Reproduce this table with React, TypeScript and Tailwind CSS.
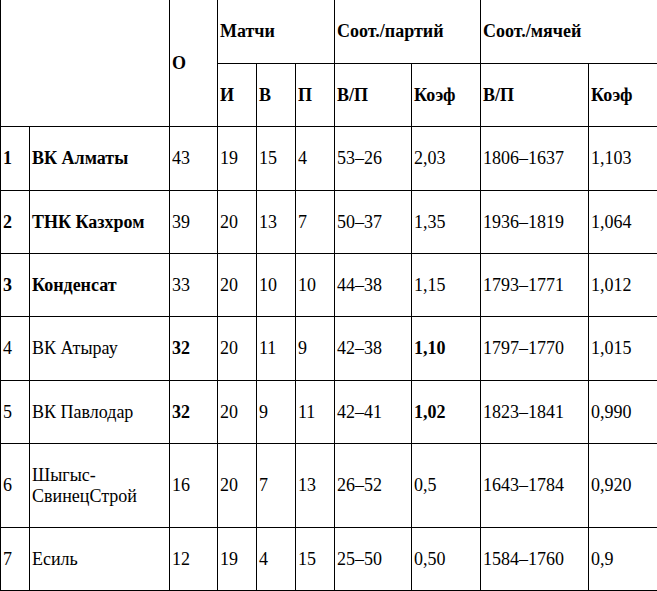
import React from "react";

type Row = {
  n: string;
  name: string;
  o: string;
  i: string;
  w: string;
  l: string;
  sp: string;
  kp: string;
  sm: string;
  km: string;
  boldName?: boolean;
  boldO?: boolean;
  boldKp?: boolean;
  h: string;
};

const rows: Row[] = [
  { n: "1", name: "ВК Алматы", o: "43", i: "19", w: "15", l: "4", sp: "53–26", kp: "2,03", sm: "1806–1637", km: "1,103", boldName: true, h: "h-[64px]" },
  { n: "2", name: "ТНК Казхром", o: "39", i: "20", w: "13", l: "7", sp: "50–37", kp: "1,35", sm: "1936–1819", km: "1,064", boldName: true, h: "h-[63px]" },
  { n: "3", name: "Конденсат", o: "33", i: "20", w: "10", l: "10", sp: "44–38", kp: "1,15", sm: "1793–1771", km: "1,012", boldName: true, h: "h-[63px]" },
  { n: "4", name: "ВК Атырау", o: "32", i: "20", w: "11", l: "9", sp: "42–38", kp: "1,10", sm: "1797–1770", km: "1,015", boldO: true, boldKp: true, h: "h-[64px]" },
  { n: "5", name: "ВК Павлодар", o: "32", i: "20", w: "9", l: "11", sp: "42–41", kp: "1,02", sm: "1823–1841", km: "0,990", boldO: true, boldKp: true, h: "h-[63px]" },
  { n: "6", name: "Шыгыс-СвинецСтрой", o: "16", i: "20", w: "7", l: "13", sp: "26–52", kp: "0,5", sm: "1643–1784", km: "0,920", h: "h-[84px]" },
  { n: "7", name: "Есиль", o: "12", i: "19", w: "4", l: "15", sp: "25–50", kp: "0,50", sm: "1584–1760", km: "0,9", h: "h-[63px]" },
];

const td =
  "border border-solid border-[#000000] px-[2px] py-0 align-middle text-left font-['Liberation_Serif','Times_New_Roman',serif] text-[18px] leading-[21px] text-black";

export default function App() {
  return (
    <div className="w-[657px] h-[591px] overflow-hidden bg-white font-['Liberation_Serif','Times_New_Roman',serif]">
      <table className="table-fixed border-collapse w-[657px] -mt-px">
        <colgroup>
          <col className="w-[29px]" />
          <col className="w-[140px]" />
          <col className="w-[48px]" />
          <col className="w-[39px]" />
          <col className="w-[39px]" />
          <col className="w-[39px]" />
          <col className="w-[77px]" />
          <col className="w-[69px]" />
          <col className="w-[108px]" />
          <col className="w-[69px]" />
        </colgroup>
        <tbody>
          <tr className="h-[64px]">
            <td className={td} colSpan={2} rowSpan={2}></td>
            <td className={`${td} font-bold`} rowSpan={2}>О</td>
            <td className={`${td} font-bold`} colSpan={3}>Матчи</td>
            <td className={`${td} font-bold`} colSpan={2}>Соот./партий</td>
            <td className={`${td} font-bold`} colSpan={2}>Соот./мячей</td>
          </tr>
          <tr className="h-[63px]">
            <td className={`${td} font-bold`}>И</td>
            <td className={`${td} font-bold`}>В</td>
            <td className={`${td} font-bold`}>П</td>
            <td className={`${td} font-bold`}>В/П</td>
            <td className={`${td} font-bold`}>Коэф</td>
            <td className={`${td} font-bold`}>В/П</td>
            <td className={`${td} font-bold`}>Коэф</td>
          </tr>
          {rows.map((r) => (
            <tr key={r.n} className={r.h}>
              <td className={`${td} ${r.boldName ? "font-bold" : ""}`}>{r.n}</td>
              <td className={`${td} ${r.boldName ? "font-bold" : ""}`}>{r.name}</td>
              <td className={`${td} ${r.boldO ? "font-bold" : ""}`}>{r.o}</td>
              <td className={td}>{r.i}</td>
              <td className={td}>{r.w}</td>
              <td className={td}>{r.l}</td>
              <td className={td}>{r.sp}</td>
              <td className={`${td} ${r.boldKp ? "font-bold" : ""}`}>{r.kp}</td>
              <td className={td}>{r.sm}</td>
              <td className={td}>{r.km}</td>
            </tr>
          ))}
        </tbody>
      </table>
    </div>
  );
}
